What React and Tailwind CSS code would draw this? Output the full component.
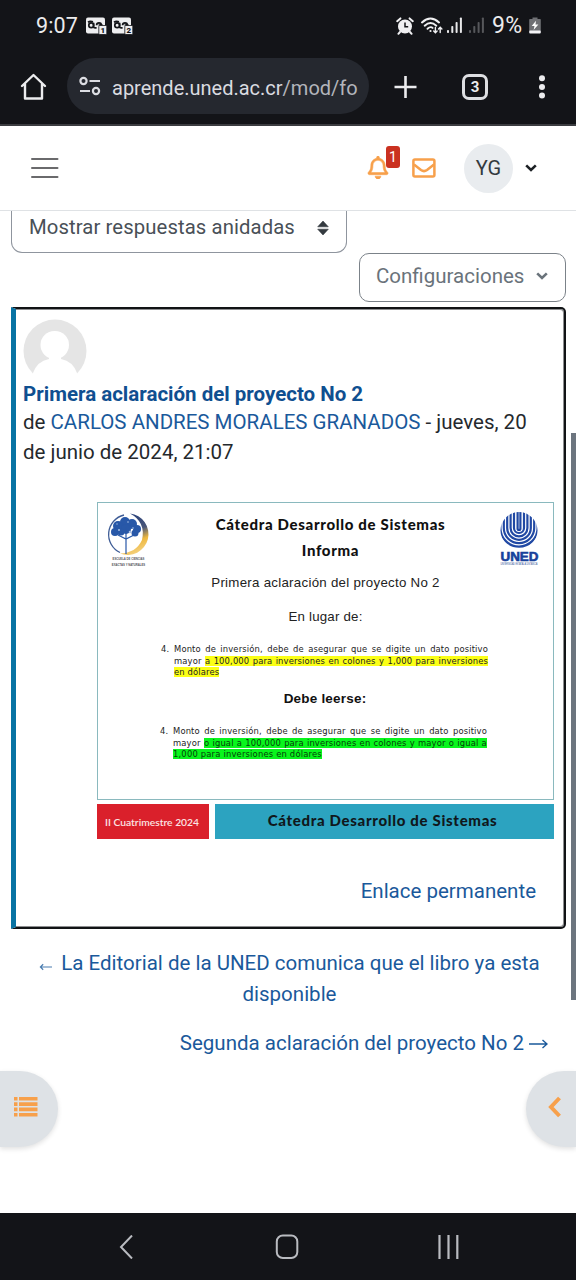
import React from 'react';
import { FaRegBell } from 'react-icons/fa';

function SimBadge({ n }) {
  return (
    <svg width="21" height="18" viewBox="0 0 21 18">
      <rect x="0" y="0.5" width="19" height="16" rx="2" fill="#eeeef0" />
      <g fill="none" stroke="#131418" strokeWidth="1.7">
        <circle cx="5.2" cy="8.3" r="2.4" />
        <path d="M7.6 5.8v4.2q0 .8 1.5 .8h1.5M10.6 8.3q0-2.5 2.4-2.5t2.4 2.5M12.6 8h4M2 5.2q2-1.4 5-.4" />
      </g>
      <rect x="12.8" y="8.5" width="8" height="9" rx="1" fill="#eeeef0" stroke="#131418" strokeWidth="0.8" />
      <text x="16.8" y="16" fontSize="8" fontWeight="900" textAnchor="middle" fontFamily="Roboto, sans-serif" fill="#131418">{n}</text>
    </svg>
  );
}

function Signal({ dim }) {
  return (
    <svg width="16" height="17" viewBox="0 0 16 17" fill={dim ? '#56575b' : '#e8e8ea'}>
      <rect x="0" y="13" width="2" height="3" rx="0.8" />
      <rect x="4.3" y="9" width="2" height="7" rx="0.8" />
      <rect x="8.6" y="5" width="2" height="11" rx="0.8" />
      <rect x="12.9" y="0.5" width="2" height="15.5" rx="0.8" />
    </svg>
  );
}

function Chevron({ className }) {
  return (
    <svg className={className} width="12" height="8" viewBox="0 0 12 8" fill="none" stroke="currentColor" strokeWidth="2.6">
      <path d="M1.2 1.4 6 6l4.800-4.600" />
    </svg>
  );
}

function StatusBar() {
  return (
    <div className="flex h-[51px] items-center pl-[36px] text-[#ebebed]">
      <span className="w-[50px] whitespace-nowrap text-[21.5px] leading-[26px] tracking-[0.1px]">9:07</span>
      <div className="flex gap-[5px]">
        <SimBadge n="1" />
        <SimBadge n="2" />
      </div>
      <div className="ml-[263px] flex items-center">
        <svg width="18" height="18" viewBox="0 0 18 18">
          <circle cx="9" cy="9.5" r="7" fill="#f0f0f2" />
          <path d="M1.2 4.2 4.4 1.4M16.8 4.2 13.6 1.4M4 15l-1.6 1.8M14 15l1.6 1.8" stroke="#f0f0f2" strokeWidth="2" strokeLinecap="round" />
          <path d="M9 5.5v4.3h3.2" fill="none" stroke="#131418" strokeWidth="1.5" />
        </svg>
        <svg className="ml-[6px]" width="24" height="18" viewBox="0 0 24 18" fill="none" stroke="#f0f0f2" strokeLinecap="round">
          <path d="M2 5.4Q10.500-2.400 19 5.400" strokeWidth="2" />
          <path d="M4.700 8.700Q10.500 3.400 16.300 8.700" strokeWidth="2" />
          <path d="M7.500 11.800Q10.500 9 12.600 10.900" strokeWidth="1.900" />
          <circle cx="10.500" cy="14" r="1.100" fill="#f0f0f2" stroke="none" />
          <path d="M15.400 10.500v5M13.700 14l1.700 1.800 1.700-1.800M20.200 15.500v-5M18.500 12l1.700-1.800 1.700 1.800" strokeWidth="1.400" />
        </svg>
        <span className="ml-[3px]"><Signal /></span>
        <span className="ml-[6px]"><Signal dim /></span>
        <span className="ml-[7px] w-[37px] whitespace-nowrap text-[23px] leading-[26px] tracking-[0.4px]">9%</span>
        <svg width="12" height="17" viewBox="0 0 12 17">
          <path d="M3.500 2V.5h5V2H11q.8 0 .8.8V14H.2V2.800Q.2 2 1 2z" fill="#6f7074" />
          <rect x="0.200" y="13.500" width="11.600" height="3" rx="1" fill="#f4f4f6" />
          <path d="M7 3.800 2.700 9h2.800l-.9 4L9.400 7.600H6.500z" fill="#fff" />
        </svg>
      </div>
    </div>
  );
}

function BrowserBar() {
  return (
    <div className="flex h-[75px] items-start border-b-2 border-[#3b3c40] pt-[7px]">
      <div className="flex h-[56px] w-[67px] items-center pl-[20px]">
        <svg width="27" height="28" viewBox="0 0 27 28" fill="none" stroke="#ececee" strokeWidth="2.400" strokeLinejoin="round" strokeLinecap="round">
          <path d="M2 14 13.500 3 25 14M5 12V26.500h17V12" />
        </svg>
      </div>
      <div className="flex h-[56px] w-[302px] items-center rounded-full bg-[#25282f] pl-[12px]">
        <svg width="22" height="20" viewBox="0 0 22 20" fill="none" stroke="#dcdde2" strokeWidth="2.200">
          <circle cx="4.500" cy="5" r="3.100" />
          <path d="M10.500 5H21M1 15h10" />
          <circle cx="17" cy="15" r="3.100" />
        </svg>
        <span className="ml-[11px] mt-[3px] whitespace-nowrap text-[20px] leading-[28px] text-[#dadbe0]">
          aprende.uned.ac.cr<span className="text-[#b3b5bb]">/mod/fo</span>
        </span>
      </div>
      <div className="flex h-[57px] items-center">
        <svg className="ml-[25px]" width="23" height="24" viewBox="0 0 23 24" stroke="#ececee" strokeWidth="2.600">
          <path d="M11.500 1v22M0.500 12h22" />
        </svg>
        <div className="ml-[45px] mt-[1px] flex h-[26px] w-[26px] items-center justify-center rounded-[7px] border-[3px] border-[#dedfe2] text-[15px] font-bold leading-none text-[#ececee]">3</div>
        <svg className="ml-[50px]" width="8" height="24" viewBox="0 0 8 24" fill="#ececee">
          <circle cx="4" cy="3.200" r="3" />
          <circle cx="4" cy="12" r="3" />
          <circle cx="4" cy="20.500" r="3" />
        </svg>
      </div>
    </div>
  );
}

function SiteHeader() {
  return (
    <header className="flex h-[85px] items-center border-b border-[#dfe2e5] bg-white">
      <svg className="ml-[31px]" width="28" height="22" viewBox="0 0 28 22" stroke="#6a6a6c" strokeWidth="2" strokeLinecap="round">
        <path d="M1 2h25.500M1 11h25.500M1 20h25.500" />
      </svg>
      <div className="relative ml-[308px] h-[24px] w-[22px]">
        <FaRegBell className="h-[23px] w-[22px] text-[#f7a04b]" stroke="#f7a04b" strokeWidth="12" />
        <span className="absolute left-[19px] top-[-10px] flex h-[22px] w-[14px] items-center justify-center rounded-[3px] bg-[#ca3120] text-[14px] leading-none text-white">1</span>
      </div>
      <svg className="ml-[23px]" width="24" height="20" viewBox="0 0 24 20" fill="none" stroke="#f7a04b" strokeWidth="2.500" strokeLinejoin="round">
        <rect x="1.400" y="1.600" width="21" height="16.800" rx="1.500" />
        <path d="M2 6.500 9 12q3 2.200 6 0l7-5.500" />
      </svg>
      <div className="ml-[28px] flex h-[49px] w-[49px] items-center justify-center rounded-full bg-[#e9ecef] text-[20px] text-[#343a40]">YG</div>
      <Chevron className="ml-[12px] text-[#1d2125]" />
    </header>
  );
}

const seal = (
  <svg className="overflow-visible" width="44" height="58" viewBox="0 0 44 58">
    <defs>
      <linearGradient id="ring" x1="0.300" y1="0" x2="0.600" y2="1">
        <stop offset="0" stopColor="#243f7c" />
        <stop offset="0.450" stopColor="#4a5678" />
        <stop offset="0.700" stopColor="#eeb83f" />
        <stop offset="1" stopColor="#f5d488" />
      </linearGradient>
    </defs>
    <path d="M24 1.500A20.800 20.800 0 1 1 14 41.500Q30 41 36 28 40 10 24 1.500z" fill="url(#ring)" />
    <path d="M18 3A20 20 0 0 0 14 40.500" fill="none" stroke="#3e5c96" strokeWidth="1.300" />
    <g fill="#2858a8">
      <circle cx="19" cy="10" r="5" /><circle cx="12" cy="14" r="5" /><circle cx="26" cy="12" r="5" />
      <circle cx="31" cy="17" r="4" /><circle cx="20" cy="17" r="5" /><circle cx="9" cy="20" r="4" />
      <circle cx="29" cy="21" r="3.500" /><circle cx="15" cy="20" r="3.500" />
    </g>
    <g fill="#a9c1e4">
      <circle cx="13" cy="18" r="1" /><circle cx="24" cy="20" r="1.300" /><circle cx="22" cy="10" r="0.800" /><circle cx="27" cy="16" r="0.800" /><circle cx="11" cy="12" r="0.700" />
    </g>
    <path d="m12 23 8 4 8-4M20 15v27" fill="none" stroke="#2858a8" strokeWidth="1.200" />
    <g fontFamily="'Liberation Sans', sans-serif" fontWeight="700" fontSize="2.800" fill="#55555b" textAnchor="middle">
      <text x="22.500" y="31.800" transform="scale(1 1.500)">ESCUELA DE CIENCIAS</text>
      <text x="22.500" y="35.700" transform="scale(1 1.500)">EXACTAS Y NATURALES</text>
    </g>
  </svg>
);

const uned = (
  <svg className="overflow-visible" width="40" height="56" viewBox="0 0 40 56">
    <defs><clipPath id="globe"><circle cx="20" cy="18.500" r="18.500" /></clipPath></defs>
    <g clipPath="url(#globe)" fill="none" stroke="#2149a4" strokeWidth="2.200">
      <path d="M18.600-2v18.500q0 1.500 1.400 1.500t1.400-1.500V-2" />
      <path d="M15-2v18a5 5 0 0 0 10 0V-2" />
      <path d="M11.600-2v18a8.400 8.400 0 0 0 16.800 0V-2" />
      <path d="M8.200-2v18a11.800 11.800 0 0 0 23.600 0V-2" />
      <path d="M4.800-2v18a15.200 15.200 0 0 0 30.400 0V-2" />
      <path d="M1.400-2v18a18.600 18.600 0 0 0 37.200 0V-2" />
    </g>
    <text x="1.500" y="48.500" textLength="38" lengthAdjust="spacingAndGlyphs" fontFamily="'Liberation Sans', sans-serif" fontWeight="700" fontSize="13" fill="#17419b" stroke="#17419b" strokeWidth="0.600">UNED</text>
    <text x="20" y="40.800" textAnchor="middle" transform="scale(1 1.300)" fontFamily="'Liberation Sans', sans-serif" fontSize="2.100" fill="#2c4d96">UNIVERSIDAD ESTATAL A DISTANCIA</text>
  </svg>
);

function Clause({ className, children }) {
  return (
    <div className={`flex w-[327px] font-['DejaVu_Sans',sans-serif] text-[8.4px] leading-[11.500px] tracking-[0.15px] text-[#222] ${className}`}>
      <span className="w-[13px] shrink-0">4.</span>
      <div className="grow">{children}</div>
    </div>
  );
}

function Line({ children, last }) {
  return <div className={last ? 'flex' : 'flex justify-between'}>{children}</div>;
}

function Spread({ text }) {
  return text.split(' ').map((w, i) => <span key={i}>{w}</span>);
}

function Notice() {
  return (
    <div className="ml-[81px] mt-[35px] w-[457px]">
      <div className="flex h-[298px] border border-[#8ab9be] pt-[9px]">
        <div className="w-[59px] shrink-0 pl-[8px]">{seal}</div>
        <div className="flex w-[335px] shrink-0 flex-col items-center">
          <div className="ml-[12px] mt-[-1px] flex flex-col items-center whitespace-nowrap font-[Lato,sans-serif] text-[15px] font-black leading-[26px] tracking-[0.68px] text-[#111]">
            <span>Cátedra Desarrollo de Sistemas</span>
            <span>Informa</span>
          </div>
          <p className="ml-[2px] mt-[10px] whitespace-nowrap font-['Liberation_Sans',sans-serif] text-[13.3px] leading-[20px] tracking-[0.27px] text-[#222]">Primera aclaración del proyecto No 2</p>
          <p className="ml-[2px] mt-[14px] font-['Liberation_Sans',sans-serif] text-[13.3px] leading-[20px] tracking-[0.200px] text-[#222]">En lugar de:</p>
          <Clause className="mt-[17px]">
            <Line><Spread text="Monto de inversión, debe de asegurar que se digite un dato positivo" /></Line>
            <Line>
              <span className="w-[31px] shrink-0">mayor</span>
              <span className="flex h-[10px] grow justify-between whitespace-nowrap bg-[#fbff16] leading-[11px]"><Spread text="a 100,000 para inversiones en colones y 1,000 para inversiones" /></span>
            </Line>
            <Line last><span className="h-[10px] whitespace-nowrap bg-[#fbff16] leading-[10px]">en dólares</span></Line>
          </Clause>
          <p className="ml-[1px] mt-[12px] font-['Liberation_Sans',sans-serif] text-[13.5px] font-bold leading-[20px] tracking-[0.2px] text-[#111]">Debe leerse:</p>
          <Clause className="ml-[-2px] mt-[17px]">
            <Line><Spread text="Monto de inversión, debe de asegurar que se digite un dato positivo" /></Line>
            <Line>
              <span className="w-[31px] shrink-0">mayor</span>
              <span className="flex h-[10px] grow justify-between whitespace-nowrap bg-[#09f51d] leading-[11px] text-[#06400a]"><Spread text="o igual a 100,000 para inversiones en colones y mayor o igual a" /></span>
            </Line>
            <Line last><span className="h-[10px] whitespace-nowrap bg-[#09f51d] leading-[10px] tracking-[0.19px] text-[#06400a]">1,000 para inversiones en dólares</span></Line>
          </Clause>
        </div>
        <div className="pl-[7px]">{uned}</div>
      </div>
      <div className="mt-[4px] flex h-[35px] gap-[6px] font-[Lato,sans-serif]">
        <div className="flex w-[112px] items-center justify-center whitespace-nowrap bg-[#da202b] pr-[2px] pt-[3px] text-[10.300px] font-semibold text-[#fbe4e4]">II Cuatrimestre 2024</div>
        <div className="flex grow items-center justify-center whitespace-nowrap bg-[#2ca3c0] pb-[2px] pr-[4px] text-[15px] font-black tracking-[0.68px] text-[#10181c]">Cátedra Desarrollo de Sistemas</div>
      </div>
    </div>
  );
}

function Post() {
  return (
    <article className="ml-[11px] mt-[5px] h-[622px] w-[555px] rounded-r-[5px] border-y-[2px] border-l-[5px] border-r-[2px] border-y-[#111315] border-l-[#0873a3] border-r-[#111315] shadow-[inset_-1px_1px_0_#8d8e90,inset_-1px_-1px_0_#8d8e90]">
      <svg className="ml-[7px] mt-[10px]" width="64" height="64" viewBox="0 0 64 64">
        <circle cx="32" cy="32" r="31.500" fill="#e5e5e5" />
        <rect x="17.500" y="12" width="28.500" height="28" rx="14" fill="#fff" />
        <path d="M26 37v3Q14 42 9.500 55L5 64h54l-4.500-9Q50 42 38 40v-3z" fill="#fff" />
      </svg>
      <div className="ml-[7px] whitespace-nowrap text-[20.5px] text-[#25292d]">
        <h3 className="mt-[-3px] text-[20.5px] font-bold leading-[28px] text-[#0f4f90]">Primera aclaración del proyecto No 2</h3>
        <p className="leading-[30px] mt-[-1px]">de <a className="text-[#1a599b]">CARLOS ANDRES MORALES GRANADOS</a> - jueves, 20<br />de junio de 2024, 21:07</p>
      </div>
      <Notice />
      <a className="mr-[28px] mt-[37px] block text-right text-[20.5px] leading-[30px] text-[#1a599b]">Enlace permanente</a>
    </article>
  );
}

export default function App() {
  return (
    <div className="relative flex h-[1280px] w-[576px] flex-col overflow-hidden bg-white font-[Roboto,sans-serif]">
      <div className="h-[126px] shrink-0 bg-[#131418]">
        <StatusBar />
        <BrowserBar />
      </div>
      <SiteHeader />
      <main className="grow">
        <div className="ml-[11px] flex h-[42px] w-[336px] items-center rounded-b-[11px] border border-t-0 border-[#8f959e] pb-[9px] pl-[17px] text-[20.3px] tracking-[0.100px] text-[#495057]">
          <span className="w-[288px] whitespace-nowrap">Mostrar respuestas anidadas</span>
          <svg className="mt-[2px]" width="12" height="16" viewBox="0 0 12 16" fill="#343a40"><path d="M6 1 11.300 6.800H.7zM6 15 .7 9.200h10.600z" stroke="#343a40" strokeWidth="0.600" strokeLinejoin="round" /></svg>
        </div>
        <div className="ml-[359px] flex h-[49px] w-[207px] items-center rounded-[10px] border border-[#7b8289] pb-[3px] pl-[16px] text-[20.5px] text-[#6a737b]">
          <span className="w-[160px] whitespace-nowrap">Configuraciones</span>
          <Chevron />
        </div>
        <Post />
        <nav className="flex flex-col text-[20.5px] leading-[31px] text-[#1a599b]">
          <a className="ml-[3px] mt-[19px] whitespace-nowrap text-center">
            <svg className="mr-[9px] inline-block align-[-1px]" width="13" height="8" viewBox="0 0 14 8" fill="none" stroke="#4a7cb0" strokeWidth="1.300"><path d="M14 4H1.500M4.500 1l-3 3 3 3" /></svg>
            La Editorial de la UNED comunica que el libro ya esta<br />disponible
          </a>
          <a className="mr-[28px] mt-[18px] flex items-center justify-end whitespace-nowrap">Segunda aclaración del proyecto No 2
            <svg className="ml-[5px]" width="19" height="10" viewBox="0 0 19 10" fill="none" stroke="#1a599b" strokeWidth="1.400"><path d="M0 5h18M13.500 1l4.500 4-4.500 4" /></svg>
          </a>
        </nav>
        <div className="mt-[12px] flex justify-between">
          <button className="flex h-[76px] w-[58px] items-center rounded-r-[38px] bg-[#dee2e6] pb-[5px] pl-[14px] shadow-[0_2px_5px_rgba(0,0,0,0.12)]">
            <svg width="24" height="22" viewBox="0 0 24 22" fill="#f7a04b">
              <path d="M0 1h3.500v3.600H0zM5 1h18.500v3.600H5zM0 6.300h3.500v3.600H0zM5 6.300h18.500v3.600H5zM0 11.600h3.500v3.600H0zM5 11.600h18.500v3.600H5zM0 16.900h3.500v3.600H0zM5 16.900h18.500v3.600H5z" />
            </svg>
          </button>
          <button className="flex h-[76px] w-[50px] items-center rounded-l-[38px] bg-[#dee2e6] pb-[5px] pl-[21px] shadow-[0_2px_5px_rgba(0,0,0,0.12)]">
            <svg width="15" height="24" viewBox="0 0 15 24" fill="none" stroke="#f7a04b" strokeWidth="4" strokeLinejoin="miter"><path d="M12.500 3 4 12l8.500 9" /></svg>
          </button>
        </div>
      </main>
      <footer className="flex h-[67px] shrink-0 items-center bg-[#131418]">
        <svg className="ml-[119px]" width="15" height="24" viewBox="0 0 15 24" fill="none" stroke="#b9bbc0" strokeWidth="2"><path d="M13 0.500 2 12l11 11.500" /></svg>
        <svg className="ml-[141px]" width="24" height="26" viewBox="0 0 24 26" fill="none" stroke="#b9bbc0" strokeWidth="2"><rect x="1.800" y="1.500" width="20.500" height="22.500" rx="6" /></svg>
        <svg className="ml-[138px]" width="23" height="24" viewBox="0 0 23 24" stroke="#b9bbc0" strokeWidth="2.200"><path d="M2.500 0v24M11.500 0v24M20.300 0v24" /></svg>
      </footer>
      <div className="absolute right-0 top-[433px] h-[567px] w-[5px] bg-[#6c757f]" />
    </div>
  );
}
